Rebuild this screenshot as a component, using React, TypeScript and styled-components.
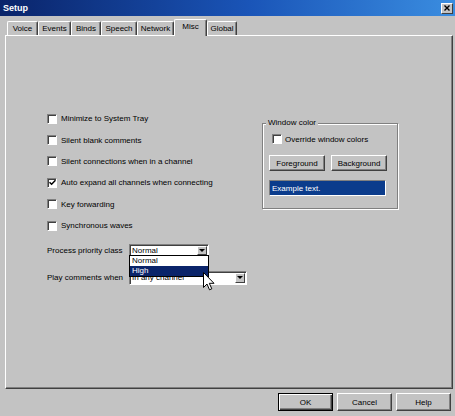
import React from 'react';
import styled, { createGlobalStyle } from 'styled-components';

const face = '#c3c3c3';

const GlobalStyle = createGlobalStyle`
	html, body {
		margin: 0;
		padding: 0;
		background: ${face};
	}
	body {
		font-family: "Liberation Sans", Arial, sans-serif;
		font-size: 8px;
		color: #000;
	}
`

const Window = styled.div`
	width: 455px;
	height: 416px;
	background: ${face};
	display: flex;
	flex-direction: column;
	overflow: hidden;
`

const TitleBar = styled.div`
	height: 16px;
	flex: none;
	display: flex;
	align-items: center;
	justify-content: space-between;
	padding: 0 2px 0 3px;
	background: linear-gradient(90deg, #0a246a 0%, #1a55b8 55%, #3a8de0 100%);
`

const Title = styled.span`
	color: #fff;
	font-weight: bold;
	font-size: 9px;
`

const CloseBox = styled.div`
	box-sizing: border-box;
	width: 12px;
	height: 11px;
	background: ${face};
	border: 1px solid;
	border-color: #fff #404040 #404040 #fff;
	display: flex;
	align-items: center;
	justify-content: center;
`

const Body = styled.div`
	flex: 1;
	display: flex;
	flex-direction: column;
	padding: 3px 2px 0 5px;
`

const TabStrip = styled.div`
	position: relative;
	z-index: 1;
	height: 17px;
	margin-bottom: -1px;
	display: flex;
	align-items: flex-end;
	padding-left: 2px;
`

const Tab = styled.div<{ $w: number; $active?: boolean }>`
	box-sizing: border-box;
	width: ${p => p.$w}px;
	height: ${p => (p.$active ? 17 : 14)}px;
	margin-bottom: ${p => (p.$active ? 0 : 1)}px;
	background: ${face};
	border: 1px solid;
	border-color: #fff #404040 transparent #fff;
	border-bottom: none;
	border-radius: 2px 2px 0 0;
	box-shadow: inset -1px 0 #808080;
	display: flex;
	align-items: ${p => (p.$active ? 'flex-start' : 'center')};
	padding-top: ${p => (p.$active ? 2 : 0)}px;
	justify-content: center;
	white-space: nowrap;
`

const Panel = styled.div`
	box-sizing: border-box;
	height: 354px;
	border: 1px solid;
	border-color: #fff #404040 #404040 #fff;
	box-shadow: inset -1px -1px #808080;
	padding: 72px 0 0 41px;
	display: grid;
	grid-template-columns: 215px 136px;
	align-items: start;
`

const Options = styled.div`
	display: flex;
	flex-direction: column;
`

const CheckRow = styled.label<{ $h?: number; $gap?: number }>`
	display: flex;
	align-items: center;
	height: ${p => p.$h ?? 21.4}px;
	gap: ${p => p.$gap ?? 4}px;
	white-space: nowrap;
`

const Box = styled.span`
	box-sizing: border-box;
	width: 10px;
	height: 10px;
	flex: none;
	background: #fff;
	border: 1px solid;
	border-color: #808080 #fff #fff #808080;
	box-shadow: inset 1px 1px #404040;
	display: flex;
	align-items: center;
	justify-content: center;
`

const SelectRow = styled.div<{ $top: number }>`
	display: flex;
	align-items: center;
	margin-top: ${p => p.$top}px;
`

const SelectLabel = styled.span`
	width: 82px;
	flex: none;
	white-space: nowrap;
`

const Combo = styled.div<{ $w: number; $h: number }>`
	position: relative;
	box-sizing: border-box;
	width: ${p => p.$w}px;
	height: ${p => p.$h}px;
	background: #fff;
	border: 1px solid;
	border-color: #808080 #fff #fff #808080;
	box-shadow: inset 1px 1px #404040;
	display: flex;
	align-items: center;
	padding-left: 2px;
	white-space: nowrap;
`

const DropButton = styled.span`
	box-sizing: border-box;
	margin-left: auto;
	margin-right: 1px;
	width: 10px;
	height: calc(100% - 2px);
	background: ${face};
	border: 1px solid;
	border-color: #fff #404040 #404040 #fff;
	display: flex;
	align-items: center;
	justify-content: center;
	&::after {
		content: '';
		border-left: 3px solid transparent;
		border-right: 3px solid transparent;
		border-top: 3px solid #000;
	}
`

const DropList = styled.div`
	position: absolute;
	z-index: 3;
	top: calc(100% - 1px);
	left: -1px;
	right: -1px;
	background: #fff;
	border: 1px solid #000;
`

const ListItem = styled.div<{ $selected?: boolean }>`
	height: 10px;
	line-height: 10px;
	padding-left: 2px;
	background: ${p => (p.$selected ? '#0a246a' : '#fff')};
	color: ${p => (p.$selected ? '#fff' : '#000')};
`

const Cursor = styled.svg`
	position: absolute;
	z-index: 4;
	left: 73px;
	top: 27px;
`

const GroupBox = styled.div`
	box-sizing: border-box;
	margin-top: 15px;
	height: 86px;
	border: 1px solid #808080;
	box-shadow: 1px 1px 0 #fff, inset 1px 1px 0 #fff;
	padding: 0 0 0 6px;
	display: flex;
	flex-direction: column;
	align-items: flex-start;
`

const Legend = styled.span`
	margin: -6px 0 0 -3px;
	padding: 0 2px;
	line-height: 10px;
	background: ${face};
`

const ButtonRow = styled.div`
	display: flex;
	gap: 6px;
	margin-top: 10px;
`

const Button = styled.button<{ $w: number; $h: number; $default?: boolean }>`
	box-sizing: border-box;
	width: ${p => p.$w}px;
	height: ${p => p.$h}px;
	padding: 0;
	font: inherit;
	color: #000;
	background: ${face};
	border: 1px solid;
	border-color: ${p => (p.$default ? '#000' : '#fff #404040 #404040 #fff')};
	box-shadow: ${p =>
		p.$default
			? 'inset 1px 1px #fff, inset -1px -1px #404040, inset -2px -2px #808080'
			: 'inset -1px -1px #808080'};
`

const Example = styled.div`
	box-sizing: border-box;
	margin-top: 9px;
	width: 117px;
	height: 16px;
	background: #0b3c8c;
	color: #fff;
	border: 1px solid;
	border-color: #808080 #fff #fff #808080;
	padding-left: 2px;
	display: flex;
	align-items: center;
`

const Footer = styled.div`
	display: flex;
	justify-content: flex-end;
	gap: 4px;
	padding: 4px 2px 0 0;
`

const tabs: [string, number][] = [
	['Voice', 31],
	['Events', 33],
	['Binds', 30],
	['Speech', 36],
	['Network', 37],
	['Misc', 33],
	['Global', 30],
];

const options: [string, boolean][] = [
	['Minimize to System Tray', false],
	['Silent blank comments', false],
	['Silent connections when in a channel', false],
	['Auto expand all channels when connecting', true],
	['Key forwarding', false],
	['Synchronous waves', false],
];

function Check({ checked }: { checked?: boolean }) {
	return (
		<Box>
			{checked && (
				<svg width="7" height="7" viewBox="0 0 7 7">
					<path d="M0.5 3.2 L2.6 5.3 L6.5 1.2" fill="none" stroke="#000" strokeWidth="1.5" />
				</svg>
			)}
		</Box>
	);
}

function App() {
	return (
		<Window>
			<GlobalStyle />
			<TitleBar>
				<Title>Setup</Title>
				<CloseBox>
					<svg width="6" height="6" viewBox="0 0 6 6">
						<path d="M0.5 0.5 L5.5 5.5 M5.5 0.5 L0.5 5.5" stroke="#000" strokeWidth="1.4" />
					</svg>
				</CloseBox>
			</TitleBar>
			<Body>
				<TabStrip>
					{tabs.map(([name, w]) => (
						<Tab key={name} $w={w} $active={name === 'Misc'}>{name}</Tab>
					))}
				</TabStrip>
				<Panel>
					<Options>
						{options.map(([text, checked]) => (
							<CheckRow key={text}>
								<Check checked={checked} />
								{text}
							</CheckRow>
						))}
						<SelectRow $top={7.6}>
							<SelectLabel>Process priority class</SelectLabel>
							<Combo $w={80} $h={13}>
								Normal
								<DropButton />
								<DropList>
									<ListItem>Normal</ListItem>
									<ListItem $selected>High</ListItem>
								</DropList>
								<Cursor width="12" height="19" viewBox="0 0 12 19">
									<path
										d="M0.5 0.5 L0.5 15.5 L4 12 L6.5 17.8 L8.8 16.8 L6.3 11.3 L11 11.3 Z"
										fill="#fff"
										stroke="#000"
										strokeWidth="1"
										strokeLinejoin="miter"
									/>
								</Cursor>
							</Combo>
						</SelectRow>
						<SelectRow $top={14}>
							<SelectLabel>Play comments when</SelectLabel>
							<Combo $w={118} $h={14}>
								In any channel
								<DropButton />
							</Combo>
						</SelectRow>
					</Options>
					<GroupBox>
						<Legend>Window color</Legend>
						<CheckRow $h={12} $gap={3} style={{ marginTop: 5, marginLeft: 3 }}>
							<Check />
							Override window colors
						</CheckRow>
						<ButtonRow>
							<Button $w={56} $h={16}>Foreground</Button>
							<Button $w={56} $h={16}>Background</Button>
						</ButtonRow>
						<Example>Example text.</Example>
					</GroupBox>
				</Panel>
				<Footer>
					<Button $w={55} $h={18} $default>OK</Button>
					<Button $w={55} $h={18}>Cancel</Button>
					<Button $w={55} $h={18}>Help</Button>
				</Footer>
			</Body>
		</Window>
	);
}

export default App;
